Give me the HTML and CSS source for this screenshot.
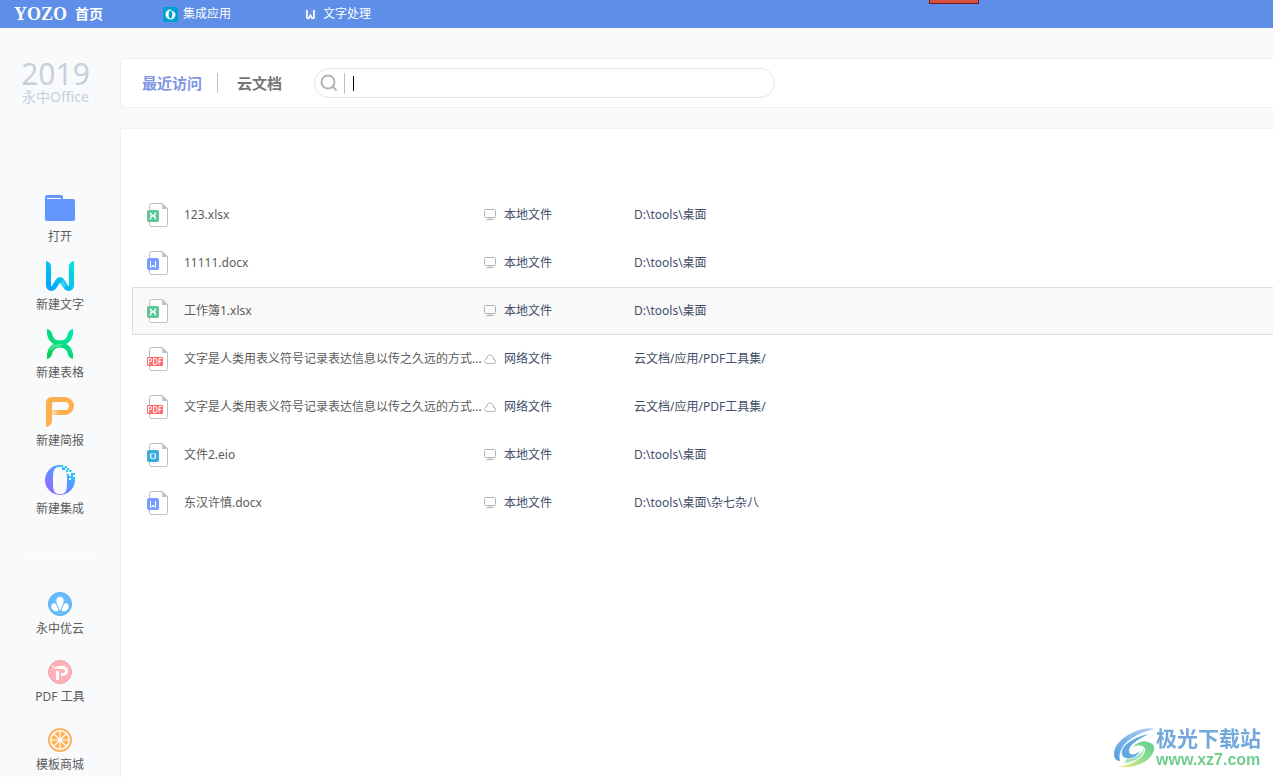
FILE: index.html
```html
<!DOCTYPE html>
<html lang="zh-CN">
<head>
<meta charset="utf-8">
<title>永中Office 2019</title>
<link rel="stylesheet" href="styles.css">
</head>
<body>
<svg class="defs" aria-hidden="true">
  <defs>
    <linearGradient id="g-blue" gradientUnits="userSpaceOnUse" x1="2" y1="28" x2="28" y2="2"><stop offset="0" stop-color="#0a9fff"/><stop offset="1" stop-color="#00e6d8"/></linearGradient>
    <linearGradient id="g-green" gradientUnits="userSpaceOnUse" x1="2" y1="28" x2="28" y2="2"><stop offset="0" stop-color="#0bd04e"/><stop offset="1" stop-color="#00e8b4"/></linearGradient>
    <linearGradient id="g-purple" x1="0" y1="1" x2="1" y2="0"><stop offset="0" stop-color="#a45cff"/><stop offset=".55" stop-color="#5b95ff"/><stop offset="1" stop-color="#1fd3ff"/></linearGradient>
    <linearGradient id="g-fade" x1="0" y1="0" x2="1" y2="0"><stop offset="0" stop-color="#fdd9ab"/><stop offset="1" stop-color="#ffad4d"/></linearGradient>
    <linearGradient id="g-sky" x1="0" y1="1" x2="1" y2="0"><stop offset="0" stop-color="#4f9be0"/><stop offset="1" stop-color="#b5d0f0"/></linearGradient>
    <linearGradient id="g-leaf" x1="0" y1="1" x2="1" y2="0"><stop offset="0" stop-color="#f0ee86"/><stop offset=".5" stop-color="#8fdc8f"/><stop offset="1" stop-color="#62cf92"/></linearGradient>
  </defs>
  <symbol id="sheet" viewBox="0 0 22 24">
    <path d="M4 .5h11.500l5 5v16a2 2 0 0 1-2 2H4a2 2 0 0 1-1.500-2v-19A2 2 0 0 1 4 .5z" fill="#fff" stroke="#bfc1c5"/>
    <path d="M15 .5v4.500q0 1 1 1h4.500z" fill="#bfc1c5"/>
  </symbol>
  <symbol id="file-x" viewBox="0 0 22 24">
    <use href="#sheet"/><rect y="7" width="12" height="12" rx="2" fill="#5cc691"/>
    <path d="M3.500 9.500q0 3 2.500 3t2.500-3M3.500 16.500q0-3.500 2.500-3.500t2.500 3.500" fill="none" stroke="#fff" stroke-width="1.300"/>
  </symbol>
  <symbol id="file-w" viewBox="0 0 22 24">
    <use href="#sheet"/><rect y="7" width="12" height="12" rx="2" fill="#769cff"/>
    <path d="M3.500 10v6H5l1-2 1 2h1.500v-6" fill="none" stroke="#fff"/>
  </symbol>
  <symbol id="file-o" viewBox="0 0 22 24">
    <use href="#sheet"/><rect y="7" width="12" height="12" rx="2" fill="#3aacdf"/>
    <path fill-rule="evenodd" d="M6 10a3 3 0 1 1 0 6.200a3 3 0 1 1 0-6.200zM6 10.600c-2.400 0-2.400 5 0 5s2.400-5 0-5z" fill="#fff"/>
  </symbol>
  <symbol id="file-p" viewBox="0 0 22 24">
    <use href="#sheet"/><rect y="10" width="16" height="9" rx="1" fill="#ff6d70"/>
    <path d="M1.500 17.500v-6h2q1 0 1 1.500t-1 1.500h-2M6.500 17.500v-6h1.500q2 0 2 3t-2 3zM12 17.500v-6h3M12 14.500h2.500" fill="none" stroke="#fff"/>
  </symbol>
  <symbol id="screen" viewBox="0 0 12 12">
    <rect x=".5" y=".5" width="11" height="8" rx="1" fill="none" stroke="#b2b2b2"/><path d="M6 8.500v2M2.500 10.500h7" stroke="#b2b2b2"/>
  </symbol>
  <symbol id="cloud" viewBox="0 0 12 12">
    <path d="M3 10.500h6.500a2 2 0 0 0 0-4C9.300 3.500 8 2 6 2S2.800 3.500 2.700 5.800C.2 6.200-.2 10 3 10.500z" fill="none" stroke="#b2b2b2"/>
  </symbol>
</svg>

<header class="titlebar">
  <a class="home" href="#"><span class="brand">YOZO</span><span class="home-label">首页</span></a>
  <a class="tab" href="#">
    <svg class="tab-icon" viewBox="0 0 15 15"><rect width="15" height="15" rx="2" fill="#009fd0"/><path fill-rule="evenodd" d="M7.500 2.500a5 5 0 0 0 0 10a5 5 0 0 0 4.500-7h-1.500V4h-2V2.500zM7.500 3.500c-2.500 0-2.500 8 0 8s2.500-8 0-8z" fill="#fff"/></svg>
    集成应用
  </a>
  <a class="tab" href="#">
    <svg class="tab-icon" viewBox="0 0 15 15"><rect width="15" height="15" rx="2" fill="#6490e6"/><path d="M4 3v7q0 1.500 1 1.500t2.500-3q1.500 3 2.500 3t1-1.500V3" fill="none" stroke="#fff" stroke-width="1.700"/></svg>
    文字处理
  </a>
  <span class="notch"></span>
</header>

<div class="layout">
  <aside class="sidebar">
    <div class="product"><span class="year">2019</span><span class="name">永中Office</span></div>
    <nav class="create">
      <button class="tool"><svg class="icon-lg" viewBox="0 0 30 30"><path d="M2 2h14q2 0 2 2v2h10q2 0 2 2v18q0 2-2 2H2q-2 0-2-2V4q0-2 2-2z" fill="#6397ff"/><path d="M2 5h14v1H2z" fill="#fff"/></svg>打开</button>
      <button class="tool"><svg class="icon-lg" viewBox="0 0 30 30"><path d="M3.500 5V23.500q0 4 3 4 2 0 3.500-3l3-4.500q2-3 4 0l3 4.500q1.500 3 3.500 3 3 0 3-4V5" fill="none" stroke="url(#g-blue)" stroke-width="5"/><path d="M1 0q5 1 5 6H1zM29 0q-5 1-5 6h5z" fill="url(#g-blue)"/><path d="m15 23 3-4 3 5-2 4z" fill="#6ee3f4" opacity=".5"/></svg>新建文字</button>
      <button class="tool"><svg class="icon-lg" viewBox="0 0 30 30"><path d="M4.500 4C5 10 9 14 15 14S25 10 25.500 4M4.500 26C5 20 9 16 15 16S25 20 25.500 26" fill="none" stroke="url(#g-green)" stroke-width="5"/><path d="M2 0q5 1 5 6H2zM28 0q-5 1-5 6h5zM2 30q5-1 5-6H2zM28 30q-5-1-5-6h5z" fill="url(#g-green)"/><path d="M4 21q3-6 9-6h5q-2 3-6 3-4 0-6 4z" fill="#8cf1b5" opacity=".5"/></svg>新建表格</button>
      <button class="tool"><svg class="icon-lg" viewBox="0 0 30 30"><path fill-rule="evenodd" d="M7 0h13a9 9 0 0 1 0 18H7v5q0 6-6 7V6q0-6 6-6zM9 5q-2 0-2 2v6h13a4 4 0 0 0 0-8z" fill="#ffad4d"/><path d="M7 13h9v5H7z" fill="url(#g-fade)"/></svg>新建简报</button>
      <button class="tool"><svg class="icon-lg" viewBox="0 0 30 30"><path fill-rule="evenodd" d="M15 0a15 15 0 1 0 15 15V9h-8V5h-5V0zM15 2c5 0 7 2 7 10v6c0 9-2 11-7 11s-7-2-7-11v-5C8 4 10 2 15 2z" fill="url(#g-purple)"/><path d="M14 0h4v2h-4zM20 1h2v2h-2zM18 2h2v2h-2zM22 3h2v2h-2zM24 5h3v2h-3zM21 5h2v2h-2zM26 8h4v2h-4zM23 10h3v2h-3zM27 12h3v3h-3z" fill="#2ec5f6"/><path d="M22 7h2v2h-2zM24 9h2v2h-2zM26 6h2v2h-2zM24 13h2v2h-2zM28 10h2v2h-2z" fill="#e8faff"/></svg>新建集成</button>
    </nav>
    <div class="rule"></div>
    <nav class="services">
      <button class="tool"><svg class="icon-md" viewBox="0 0 24 24"><circle cx="12" cy="12" r="11.500" fill="#69bcfc" stroke="#57afed"/><path d="M12 19Q8 14 8 8.500a4 4 0 0 1 8 0q0 5.500-4 10.500zM11 19.500c-5 .5-8-1.500-8-5 0-3 3-4.500 5-3q2 2 3 8zM13 19.500c5 .5 8-1.500 8-5 0-3-3-4.500-5-3q-2 2-3 8z" fill="#fff" stroke="#69bcfc" stroke-width=".7"/></svg>永中优云</button>
      <button class="tool"><svg class="icon-md" viewBox="0 0 24 24"><circle cx="12" cy="12" r="11.500" fill="#ffb1b8" stroke="#f4a0ad"/><path d="M8 11h3v9H8zM9 6h6a5 5 0 0 1 0 10h-2v-3h2a2 2 0 0 0 0-4h-5zM4 6h2v1H4zM7 7h2v2H7zM5 8h1v1H5z" fill="#fff"/></svg>PDF 工具</button>
      <button class="tool"><svg class="icon-md" viewBox="0 0 24 24"><circle cx="12" cy="12" r="11" fill="#fff" stroke="#fab45f" stroke-width="2"/><circle cx="12" cy="12" r="8.500" fill="#ffb05a"/><path d="M12 3v18M3 12h18M5.500 5.500l13 13M18.500 5.500l-13 13" stroke="#fff" stroke-width="1.200"/><circle cx="12" cy="12" r="2" fill="#fff"/></svg>模板商城</button>
    </nav>
  </aside>

  <main class="content">
    <section class="panel toolbar">
      <a class="view active" href="#">最近访问</a>
      <a class="view" href="#">云文档</a>
      <label class="search">
        <svg class="search-icon" viewBox="0 0 18 18"><circle cx="8" cy="8" r="6.500" fill="none" stroke="#b2b2b2" stroke-width="2"/><path d="m12 12 4.500 4.500" stroke="#b2b2b2" stroke-width="2"/></svg>
        <span class="bar"></span><span class="caret"></span>
        <input class="search-input" type="text" aria-label="搜索">
      </label>
    </section>

    <section class="panel recent">
      <table class="files">
        <colgroup><col class="col-icon"><col class="col-name"><col class="col-type"><col></colgroup>
        <tbody>
          <tr><td><svg class="file-icon"><use href="#file-x"/></svg></td><td>123.xlsx</td><td><span class="place"><svg class="place-icon"><use href="#screen"/></svg>本地文件</span></td><td>D:\tools\桌面</td></tr>
          <tr><td><svg class="file-icon"><use href="#file-w"/></svg></td><td>11111.docx</td><td><span class="place"><svg class="place-icon"><use href="#screen"/></svg>本地文件</span></td><td>D:\tools\桌面</td></tr>
          <tr class="selected"><td><svg class="file-icon"><use href="#file-x"/></svg></td><td>工作簿1.xlsx</td><td><span class="place"><svg class="place-icon"><use href="#screen"/></svg>本地文件</span></td><td>D:\tools\桌面</td></tr>
          <tr><td><svg class="file-icon"><use href="#file-p"/></svg></td><td>文字是人类用表义符号记录表达信息以传之久远的方式...</td><td><span class="place"><svg class="place-icon"><use href="#cloud"/></svg>网络文件</span></td><td>云文档/应用/PDF工具集/</td></tr>
          <tr><td><svg class="file-icon"><use href="#file-p"/></svg></td><td>文字是人类用表义符号记录表达信息以传之久远的方式...</td><td><span class="place"><svg class="place-icon"><use href="#cloud"/></svg>网络文件</span></td><td>云文档/应用/PDF工具集/</td></tr>
          <tr><td><svg class="file-icon"><use href="#file-o"/></svg></td><td>文件2.eio</td><td><span class="place"><svg class="place-icon"><use href="#screen"/></svg>本地文件</span></td><td>D:\tools\桌面</td></tr>
          <tr><td><svg class="file-icon"><use href="#file-w"/></svg></td><td>东汉许慎.docx</td><td><span class="place"><svg class="place-icon"><use href="#screen"/></svg>本地文件</span></td><td>D:\tools\桌面\杂七杂八</td></tr>
        </tbody>
      </table>
    </section>
  </main>
</div>

<div class="watermark">
  <svg class="swirl" viewBox="0 0 43 40"><path d="M42 1C33-1 25 2 19 5 8 10 1 18 1 26c0 4 2 7 6 7C4 20 16 7 42 1z" fill="url(#g-sky)"/><path d="M36 6C24 8 7 17 9 26c1 7 15 5 18-3-4 4-11 5-11 0 0-6 9-12 20-17z" fill="#62a9e4"/><path d="M20 19c4-5 10-7 15-5 5 1 7 4 6 8-2 10-17 19-35 17 14-3 25-9 26-16 1-5-5-7-12-4z" fill="url(#g-leaf)"/><path d="M14 31c9-1 15-5 17-11 1 8-8 14-20 15z" fill="#7bd7a0" opacity=".7"/></svg>
  <div class="mark-text"><span class="mark-name">极光下载站</span><span class="mark-url">www.xz7.com</span></div>
</div>
</body>
</html>
```

FILE: styles.css
```css
* { box-sizing: border-box; }
body {
  margin: 0;
  min-height: 100vh;
  display: flex;
  flex-direction: column;
  background: #f9fafc;
  color: #5c5c5c;
  font: 12px/16px "Noto Sans", "Noto Sans CJK SC", sans-serif;
}
a { color: inherit; text-decoration: none; }
svg { display: block; flex: none; }
.defs { position: absolute; width: 0; height: 0; }

.titlebar {
  position: relative;
  display: flex;
  align-items: center;
  height: 28px;
  background: #5e8ee8;
  color: #fff;
}
.home { display: flex; align-items: center; gap: 8px; width: 163px; padding-left: 14px; }
.brand { font: bold 18px/28px "Liberation Serif", serif; }
.home-label { font-size: 14px; font-weight: bold; }
.tab { display: flex; align-items: center; gap: 5px; width: 140px; line-height: 18px; }
.tab-icon { width: 15px; height: 15px; }
.notch {
  position: absolute;
  top: 0;
  left: 73%;
  width: 50px;
  height: 4px;
  background: #da4f3f;
  border: 1px solid #6b1d1d;
  border-top: 0;
}

.layout { flex: 1; display: flex; }
.sidebar { flex: none; width: 120px; display: flex; flex-direction: column; align-items: center; padding-top: 30px; }
.product { display: flex; flex-direction: column; align-items: center; width: 100%; padding-right: 9px; color: #c9d0dd; }
.year { font: 30px/32px "Noto Sans", sans-serif; }
.name { font-size: 14px; line-height: 14px; }
.create { display: flex; flex-direction: column; gap: 16px; margin-top: 89px; }
.services { display: flex; flex-direction: column; gap: 23px; margin-top: 38px; }
.tool {
  display: flex;
  flex-direction: column;
  align-items: center;
  gap: 6px;
  padding: 0;
  border: 0;
  background: none;
  color: inherit;
  font: inherit;
}
.services .tool { gap: 5px; }
.icon-lg { width: 30px; height: 30px; }
.icon-md { width: 24px; height: 24px; }
.rule { width: 72px; height: 1px; margin-top: 36px; background: linear-gradient(90deg, transparent, #fff 20%, #fff 80%, transparent); }

.content { flex: 1; min-width: 0; display: flex; flex-direction: column; gap: 20px; padding-top: 30px; }
.panel { background: #fff; border: 1px solid #eeeff1; border-right: 0; border-radius: 4px 0 0 4px; }
.toolbar { display: flex; align-items: center; height: 50px; padding-left: 21px; }
.view { color: #757575; font-size: 15px; line-height: 20px; font-weight: bold; }
.active { color: #7e96e4; padding-right: 15px; margin-right: 19px; border-right: 1px solid #c2c2c2; }
.search {
  display: flex;
  align-items: center;
  flex: 0 1 461px;
  height: 30px;
  margin-left: 32px;
  padding: 0 16px 0 5px;
  border: 1px solid #e4e4e4;
  border-radius: 15px;
}
.search-icon { width: 18px; height: 18px; }
.bar { width: 1px; height: 21px; margin: 0 8px 0 6px; background: #b9bfc8; }
.caret { width: 1px; height: 15px; background: #000; }
.search-input { flex: 1; min-width: 0; padding: 0; border: 0; outline: 0; background: none; font: inherit; }

.recent { flex: 1; border-bottom: 0; border-bottom-left-radius: 0; padding: 62px 0 0 11px; }
.files { width: 100%; table-layout: fixed; border-collapse: separate; border-spacing: 0; }
.col-icon { width: 52px; }
.col-name { width: 300px; }
.col-type { width: 150px; }
.files td { height: 48px; padding: 0; white-space: nowrap; border: solid transparent; border-width: 1px 0; }
.files td:nth-child(n+3) { color: #424e68; }
.files .selected td { background: #f9f9f9; border-color: #dedede; }
.files td:first-child { border-left: 1px solid transparent; }
.files .selected td:first-child { border-left-color: #dedede; }
.file-icon { width: 22px; height: 24px; margin-left: 14px; }
.place { display: flex; align-items: center; gap: 8px; }
.place-icon { width: 12px; height: 12px; }

.watermark { position: fixed; right: 12px; bottom: 8px; display: flex; align-items: center; }
.swirl { width: 43px; height: 40px; }
.mark-text { display: flex; flex-direction: column; }
.mark-name { color: #73a8dc; font-size: 21px; line-height: 25px; font-weight: bold; }
.mark-url { color: #70cd8d; font: bold 16px/18px "Liberation Sans", sans-serif; }
```
